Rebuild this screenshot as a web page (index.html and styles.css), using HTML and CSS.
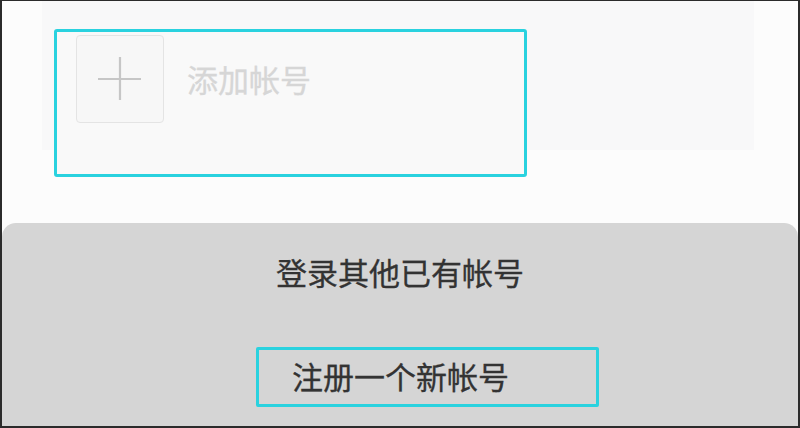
FILE: index.html
```html
<!DOCTYPE html>
<html lang="zh-CN">
<head>
<meta charset="utf-8">
<title>添加帐号</title>
<link rel="stylesheet" href="styles.css">
</head>
<body>
<div class="frame">
  <div class="top">
    <div class="panel">
      <div class="add-box">
        <div class="tile">
          <svg width="46" height="46" viewBox="0 0 46 46" aria-hidden="true">
            <path d="M23 1 V44 M1 23 H44" stroke="#c6c6c6" stroke-width="2.2" fill="none"/>
          </svg>
        </div>
        <span class="add-label">添加帐号</span>
      </div>
    </div>
  </div>
  <div class="sheet">
    <div class="sheet-title">登录其他已有帐号</div>
    <div class="register">注册一个新帐号</div>
  </div>
</div>
</body>
</html>
```
FILE: styles.css
```css
html, body {
  margin: 0;
  padding: 0;
  background: #fcfcfc;
}
body {
  font-family: "Noto Sans CJK SC", "Noto Sans", sans-serif;
}
.frame {
  box-sizing: border-box;
  width: 800px;
  height: 428px;
  border-style: solid;
  border-color: #2b2b2b;
  border-width: 1px 2px 2px 2px;
  background: #fcfcfc;
  display: flex;
  flex-direction: column;
  overflow: hidden;
}
.top {
  height: 222px;
  box-sizing: border-box;
}
.panel {
  margin-left: 40px;
  width: 712px;
  height: 149px;
  background: #f8f8f9;
  padding-top: 28px;
  box-sizing: border-box;
}
.add-box {
  box-sizing: border-box;
  margin-left: 12px;
  width: 473px;
  height: 148px;
  border: 3px solid #2ad2df;
  border-radius: 3px;
  padding: 3px 0 0 19px;
  display: flex;
  align-items: flex-start;
  background: #f9f9f9;
}
.tile {
  box-sizing: border-box;
  width: 88px;
  height: 88px;
  border: 1px solid #e4e4e4;
  border-radius: 4px;
  background: #f7f7f7;
  display: flex;
  align-items: center;
  justify-content: center;
  flex-shrink: 0;
}
.add-label {
  margin-left: 23px;
  margin-top: 28px;
  font-size: 31px;
  line-height: 31px;
  color: #d6d6d6;
  -webkit-text-stroke: 0.3px #d6d6d6;
}
.sheet {
  flex: 1;
  background: #d5d5d5;
  border-radius: 14px 14px 0 0;
  padding-top: 33px;
  box-sizing: border-box;
}
.sheet-title {
  text-align: center;
  font-size: 31px;
  line-height: 31px;
  color: #333333;
  -webkit-text-stroke: 0.3px #333333;
}
.register {
  box-sizing: border-box;
  margin-top: 60px;
  margin-left: 254px;
  width: 343px;
  height: 60px;
  border: 3px solid #2ad2df;
  border-radius: 2px;
  padding: 10px 0 0 33px;
  font-size: 31px;
  line-height: 31px;
  color: #333333;
  -webkit-text-stroke: 0.3px #333333;
}
```
